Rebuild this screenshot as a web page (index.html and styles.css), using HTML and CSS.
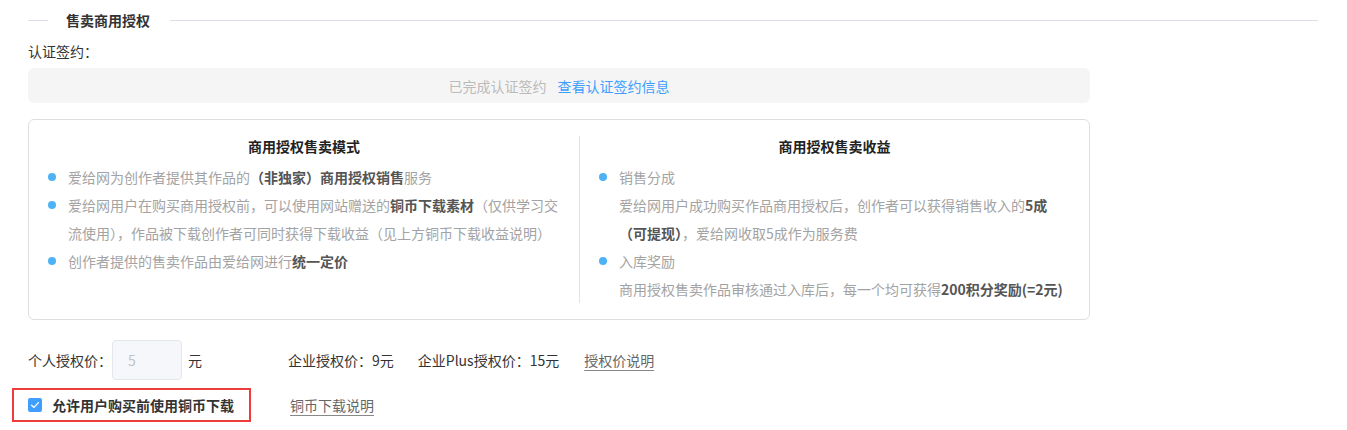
FILE: index.html
```html
<!DOCTYPE html>
<html lang="zh-CN">
<head>
<meta charset="utf-8">
<title>售卖商用授权</title>
<link rel="stylesheet" href="styles.css">
</head>
<body>
<div class="page">
  <div class="section-head">
    <span class="rule-short"></span>
    <span class="section-title">售卖商用授权</span>
    <span class="rule"></span>
  </div>

  <div class="form-label">认证签约：</div>
  <div class="sign-box">
    <span class="sign-done">已完成认证签约</span>
    <a class="sign-link" href="#">查看认证签约信息</a>
  </div>

  <div class="info-card">
    <div class="info-col info-col-left">
      <div class="col-title">商用授权售卖模式</div>
      <ul class="dot-list">
        <li><span>爱给网为创作者提供其作品的<b>（非独家）商用授权销售</b>服务</span></li>
        <li><span>爱给网用户在购买商用授权前，可以使用网站赠送的<b>铜币下载素材</b>（仅供学习交流使用），作品被下载创作者可同时获得下载收益（见上方铜币下载收益说明）</span></li>
        <li><span>创作者提供的售卖作品由爱给网进行<b>统一定价</b></span></li>
      </ul>
    </div>
    <div class="info-col">
      <div class="col-title">商用授权售卖收益</div>
      <ul class="dot-list">
        <li><span>销售分成</span></li>
        <li class="plain"><span>爱给网用户成功购买作品商用授权后，创作者可以获得销售收入的<b>5成</b><b class="nowrap">（可提现）</b>，爱给网收取5成作为服务费</span></li>
        <li><span>入库奖励</span></li>
        <li class="plain"><span>商用授权售卖作品审核通过入库后，每一个均可获得<b>200积分奖励(=2元)</b></span></li>
      </ul>
    </div>
  </div>

  <div class="price-row">
    <span class="form-text">个人授权价：</span>
    <div class="price-input">5</div>
    <span class="form-text unit">元</span>
    <span class="form-text price-item">企业授权价：9元</span>
    <span class="form-text price-item-plus">企业Plus授权价：15元</span>
    <a class="doc-link price-link" href="#">授权价说明</a>
  </div>

  <div class="check-row">
    <label class="check-label">
      <span class="check-box">
        <svg viewBox="0 0 14 14" width="14" height="14"><path d="M3.6 7.2 L6 9.4 L10.4 4.6" fill="none" stroke="#fff" stroke-width="1.3" stroke-linecap="round" stroke-linejoin="round"/></svg>
      </span>
      <span class="check-text">允许用户购买前使用铜币下载</span>
    </label>
    <a class="doc-link coin-link" href="#">铜币下载说明</a>
  </div>
</div>
</body>
</html>
```

FILE: styles.css
```css
html, body {
  margin: 0;
  padding: 0;
  background: #fff;
}

body {
  font-family: "Noto Sans CJK SC", "Microsoft YaHei", sans-serif;
  font-size: 14px;
  color: #333;
}

.page {
  padding: 10px 0 0 28px;
  width: 1062px;
}

/* section heading with hairlines */
.section-head {
  display: flex;
  align-items: center;
  width: 1290px;
  height: 20px;
}

.rule-short {
  width: 20px;
  height: 1px;
  background: #dcdfe6;
}

.rule {
  flex: 1;
  height: 1px;
  background: #dcdfe6;
}

.section-title {
  margin: 0 20px 0 18px;
  font-weight: bold;
  font-size: 14px;
  line-height: 20px;
  color: #333;
}

.form-label {
  margin-top: 11px;
  line-height: 20px;
  color: #333;
}

.sign-box {
  margin-top: 7px;
  height: 35px;
  border-radius: 6px;
  background: #f5f5f5;
  display: flex;
  align-items: center;
  justify-content: center;
}

.sign-done {
  color: #bbb;
}

.sign-link {
  margin-left: 11px;
  color: #409eff;
  text-decoration: none;
}

/* two-column info card */
.info-card {
  margin-top: 16px;
  border: 1px solid #dedede;
  border-radius: 6px;
  padding: 16px 0;
  display: flex;
}

.info-col {
  flex: 1;
  padding: 0 15px 0 19px;
}

.info-col-left {
  flex: 0 0 551px;
  box-sizing: border-box;
  border-right: 1px solid #e4e4e4;
}

.col-title {
  margin-left: -19px;
  margin-right: -15px;
  text-align: center;
  font-weight: bold;
  line-height: 20px;
  color: #222;
  margin-bottom: 7px;
}

.dot-list {
  list-style: none;
  margin: 0;
  padding: 0;
}

.dot-list li {
  display: flex;
  line-height: 28px;
  color: #a3a3a3;
}

.dot-list li::before {
  content: "";
  flex: none;
  width: 8px;
  height: 8px;
  margin: 10px 12px 0 0;
  border-radius: 50%;
  background: #4db3f6;
}

.dot-list li.plain::before {
  background: transparent;
}

.dot-list b {
  color: #555;
  font-weight: bold;
}

.nowrap {
  white-space: nowrap;
}

/* price row */
.price-row {
  margin-top: 20px;
  display: flex;
  align-items: center;
  height: 40px;
}

.form-text {
  color: #333;
}

.price-input {
  box-sizing: border-box;
  width: 70px;
  height: 40px;
  padding-left: 15px;
  line-height: 38px;
  border: 1px solid #e4e7ed;
  border-radius: 4px;
  background: #f5f7fa;
  color: #c0c4cc;
}

.unit {
  margin-left: 6px;
}

.price-item {
  margin-left: 86px;
}

.price-item-plus {
  margin-left: 24px;
}

.doc-link {
  color: #666;
  text-decoration: underline;
  text-underline-offset: 4px;
  text-decoration-color: #888;
}

.price-link {
  margin-left: 25px;
}

/* highlighted checkbox row */
.check-row {
  margin-top: 8px;
  margin-left: -16px;
  display: flex;
  align-items: center;
}

.check-label {
  display: flex;
  align-items: center;
  box-sizing: border-box;
  width: 239px;
  height: 34px;
  padding-left: 14px;
  border: 2px solid #ee3b3b;
}

.check-box {
  width: 14px;
  height: 14px;
  border-radius: 2px;
  background: #409eff;
  display: flex;
}

.check-text {
  margin-left: 10px;
  font-weight: bold;
  color: #333;
}

.coin-link {
  margin-left: 39px;
}
```
